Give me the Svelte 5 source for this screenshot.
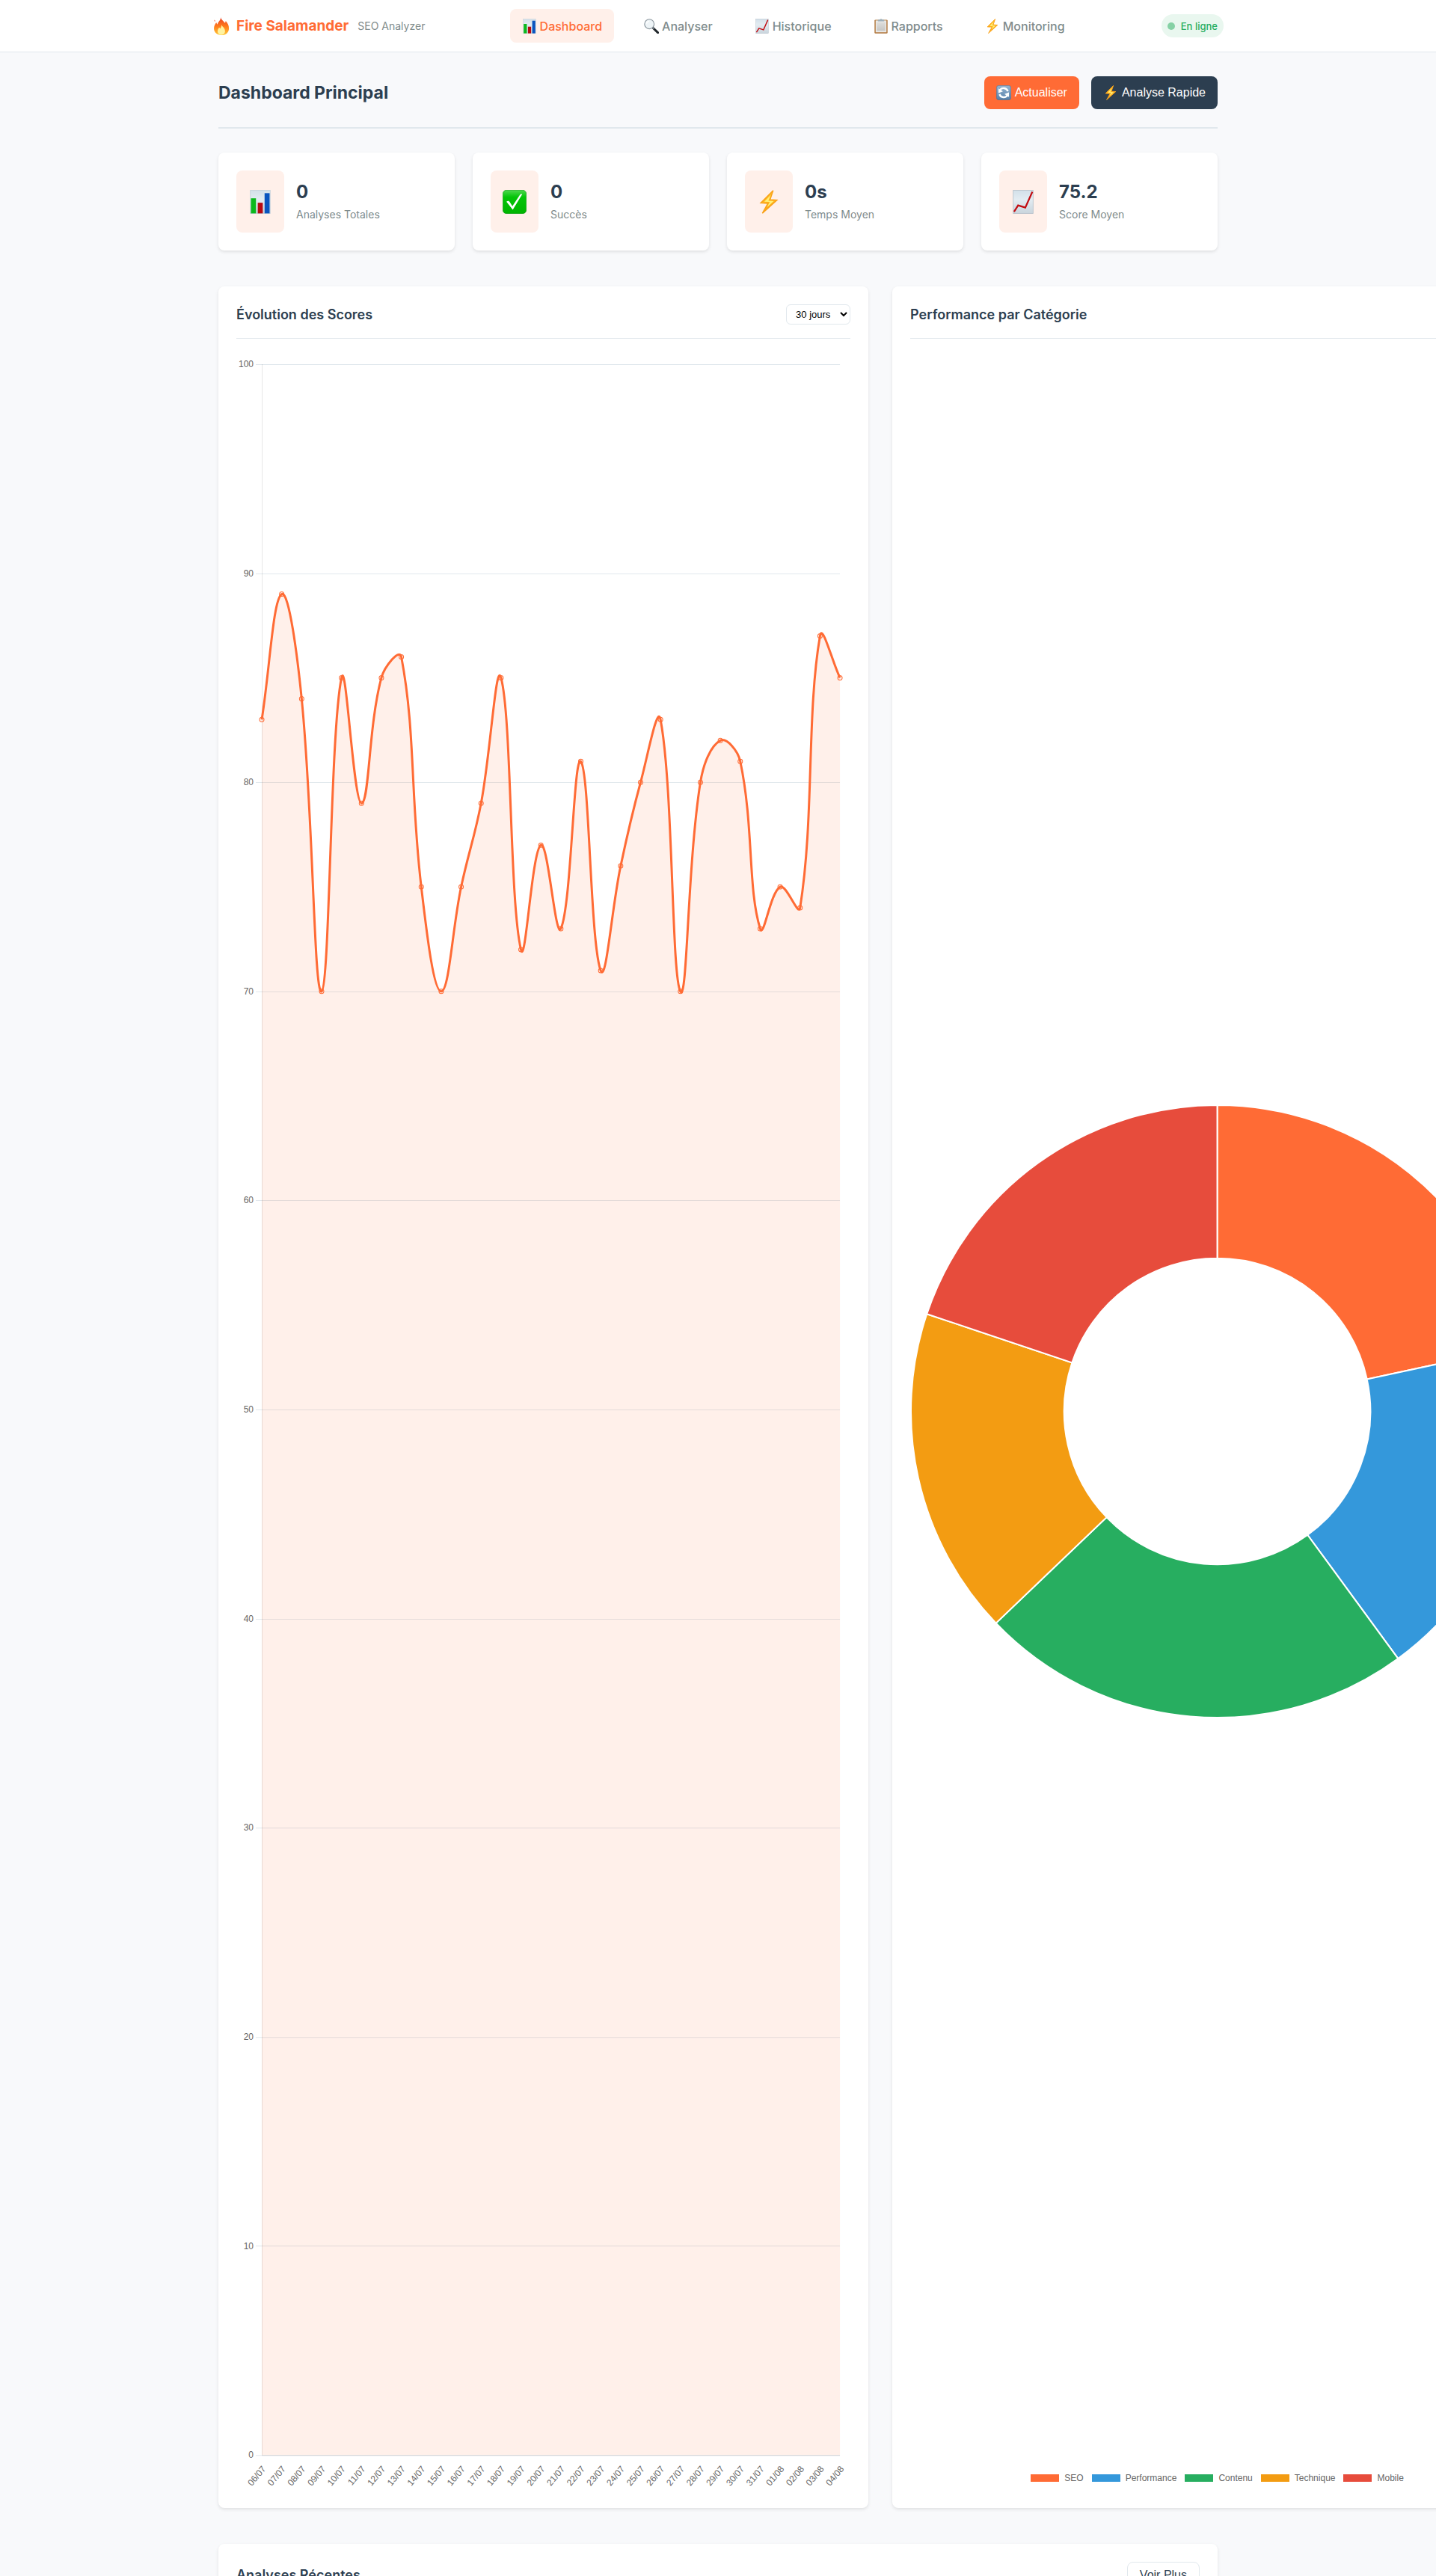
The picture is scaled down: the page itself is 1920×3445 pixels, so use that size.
<script>
  const navItems = [
    { icon: 'bars', label: 'Dashboard', active: true },
    { icon: 'search', label: 'Analyser' },
    { icon: 'trend', label: 'Historique' },
    { icon: 'clipboard', label: 'Rapports' },
    { icon: 'bolt', label: 'Monitoring' }
  ];

  const stats = [
    { icon: 'bars', value: '0', label: 'Analyses Totales' },
    { icon: 'check', value: '0', label: 'Succès' },
    { icon: 'bolt', value: '0s', label: 'Temps Moyen' },
    { icon: 'trend', value: '75.2', label: 'Score Moyen' }
  ];

  const scores = [
    83, 89, 84, 70, 85, 79, 85, 86, 75, 70, 75, 79, 85, 72, 77,
    73, 81, 71, 76, 80, 83, 70, 80, 82, 81, 73, 75, 74, 87, 85
  ];

  const two = (n) => String(n).padStart(2, '0');
  const days = scores.map((_, i) => (i < 26 ? `${two(i + 6)}/07` : `${two(i - 25)}/08`));

  // Plot area of the line chart, in viewBox units.
  const chart = { width: 821, height: 2853, left: 34, right: 807, top: 10, bottom: 2806 };
  const xAt = (i) => chart.left + (i * (chart.right - chart.left)) / (scores.length - 1);
  const yAt = (v) => chart.bottom - (v * (chart.bottom - chart.top)) / 100;
  const ticks = [100, 90, 80, 70, 60, 50, 40, 30, 20, 10, 0];
  const points = scores.map((v, i) => ({ x: xAt(i), y: yAt(v) }));

  // Cubic smoothing weighted by the distance to each neighbour.
  function smooth(pts, tension) {
    const handles = pts.map((p, i) => {
      const prev = pts[i - 1] ?? p;
      const next = pts[i + 1] ?? p;
      const before = Math.hypot(p.x - prev.x, p.y - prev.y);
      const after = Math.hypot(next.x - p.x, next.y - p.y);
      const a = (tension * before) / (before + after);
      const b = (tension * after) / (before + after);
      const dx = next.x - prev.x;
      const dy = next.y - prev.y;
      return { inX: p.x - a * dx, inY: p.y - a * dy, outX: p.x + b * dx, outY: p.y + b * dy };
    });
    let d = `M${pts[0].x} ${pts[0].y}`;
    for (let i = 1; i < pts.length; i++) {
      const from = handles[i - 1];
      const to = handles[i];
      d += `C${from.outX} ${from.outY} ${to.inX} ${to.inY} ${pts[i].x} ${pts[i].y}`;
    }
    return d;
  }

  const linePath = smooth(points, 0.4);
  const areaPath = `${linePath}L${chart.right} ${chart.bottom}L${chart.left} ${chart.bottom}Z`;

  const categories = [
    { name: 'SEO', value: 85, tone: 'seo' },
    { name: 'Performance', value: 72, tone: 'performance' },
    { name: 'Contenu', value: 90, tone: 'content' },
    { name: 'Technique', value: 68, tone: 'technical' },
    { name: 'Mobile', value: 78, tone: 'mobile' }
  ];

  function buildSlices(items) {
    const total = items.reduce((sum, c) => sum + c.value, 0);
    const outer = 409.5;
    const inner = 204.75;
    const center = 410.5;
    const at = (r, t) => `${center + r * Math.sin(t)} ${center - r * Math.cos(t)}`;
    let start = 0;
    return items.map((c) => {
      const end = start + (c.value / total) * Math.PI * 2;
      const d =
        `M${at(outer, start)}A${outer} ${outer} 0 0 1 ${at(outer, end)}` +
        `L${at(inner, end)}A${inner} ${inner} 0 0 0 ${at(inner, start)}Z`;
      start = end;
      return { ...c, d };
    });
  }
  const slices = buildSlices(categories);

  let period = $state('30');
</script>

<svelte:head><title>Fire Salamander</title></svelte:head>

{#snippet icon(name)}
  <svg class="icon" viewBox="0 0 20 20" aria-hidden="true">
    {#if name === 'bars'}
      <rect x="1.7" y="0.3" width="16.6" height="19.4" fill="url(#paper)" stroke="#c3d0da" stroke-width="0.5" />
      <rect x="2.2" y="7" width="4.2" height="12.6" fill="#0cb81c" />
      <rect x="7.9" y="10.7" width="4.2" height="8.900" fill="#b80a12" />
      <rect x="13.600" y="2.700" width="4.2" height="16.900" fill="#0a55bf" />
    {:else if name === 'trend'}
      <rect x="1.7" y="0.3" width="16.6" height="19.4" fill="url(#paper)" stroke="#b3bfc9" stroke-width="0.5" />
      <path d="M2.4 18.200 5.8 12.900 11.800 14.800 17.700 1.600" fill="none" stroke="#c20d12" stroke-width="1.400" />
    {:else if name === 'search'}
      <path d="m11.8 12 6.8 6.600" stroke="#20262b" stroke-width="3" stroke-linecap="round" />
      <path d="m11 11.2 2.400 2.400" stroke="#7c878f" stroke-width="1.600" />
      <circle cx="7.2" cy="7.2" r="6.4" fill="#eef4f7" stroke="#89949c" stroke-width="1.100" />
      <path d="M3.400 6.600a4 4 0 0 1 3.400-3.200" fill="none" stroke="#fff" stroke-width="1.400" />
    {:else if name === 'clipboard'}
      <rect x="1.300" y="1.400" width="17.400" height="18.400" rx="1.200" fill="#b27a41" />
      <rect x="2.800" y="2.400" width="14.400" height="15.800" fill="#e9e9e7" />
      <rect x="4.400" y="4.600" width="11.200" height="11.600" fill="url(#sheet)" />
      <path d="M5.800 3.400V2.200c0-.6.5-1 1.100-1h1.400a1.800 1.500 0 0 1 3.400 0h1.400c.6 0 1.100.4 1.100 1v1.200z" fill="#9fb0b9" />
    {:else if name === 'bolt'}
      <path d="M13.600 0.500 3.200 10.900l6 .3L4.600 19.500 16.800 8.500l-5.800-.4z" fill="url(#bolt)" stroke="#f9a21a" stroke-width="0.900" />
      <path d="M11.600 4.200 6.200 9.800l4.600.2-2.400 4.600 5.600-5.200-4.400-.4z" fill="#fff17a" />
    {:else if name === 'check'}
      <rect x="0.200" y="0.200" width="19.600" height="19.600" rx="3" fill="url(#green)" stroke="#0a9c12" stroke-width="0.400" />
      <path d="M3.200 9.900c1.300-1.200 2.200-.8 2.900.4l2.100 3.300 6.200-9.400c.6-.9 1.200-1 2-.6L8.500 16.600z" fill="#fff" />
    {:else if name === 'refresh'}
      <rect x="0.300" y="0.300" width="19.400" height="19.400" rx="3.400" fill="url(#blue)" stroke="#4d6c8d" stroke-width="0.600" />
      <path d="M15.600 8a6 6 0 0 0-10.800-1.200M4.400 12a6 6 0 0 0 10.800 1.200" fill="none" stroke="#fff" stroke-width="2.400" />
      <path d="M3 4.200v6.200l6-2.200zM17 15.800V9.600l-6 2.200z" fill="#fff" />
    {:else if name === 'fire'}
      <path d="M9.200 0c.4 2.600 3.200 4.200 4.700 6.400.6-.6.9-1.300.9-2.200 2.200 2.300 3.600 5 3.600 8.200 0 4.600-3.500 7.600-8.200 7.600-4.900 0-8.500-3-8.500-7.400 0-3 1.400-4.900 2.600-6.800.4 1 .7 1.700 1.400 2.200C6.300 4.900 9.400 3.500 9.200 0z" fill="url(#flame)" />
      <path d="M2.200 3c.8.5 1 1.200.8 2C2.200 4.600 1.900 3.900 2.200 3z" fill="#f4553a" />
      <path d="M10.300 8.400c.2 2 3.800 3.600 3.800 7 0 2.600-1.700 4.200-4.100 4.200s-4.200-1.600-4.200-4c0-2 1-3 1.800-4.200.4.700.8 1.100 1.300 1.300.6-1.300 1.200-2.500 1.400-4.300z" fill="#fff3a0" />
    {/if}
  </svg>
{/snippet}

<svg class="defs" aria-hidden="true">
  <defs>
    <linearGradient id="paper" x2="0" y2="1"><stop stop-color="#d3e0e9" /><stop offset="0.4" stop-color="#e3ecf2" /><stop offset="1" stop-color="#c9d4dc" /></linearGradient>
    <linearGradient id="sheet" x2="0" y2="1"><stop stop-color="#dededc" /><stop offset="1" stop-color="#c6c6c4" /></linearGradient>
    <linearGradient id="green" x2="0" y2="1"><stop stop-color="#4fd84f" /><stop offset="0.3" stop-color="#04c408" /><stop offset="1" stop-color="#00b400" /></linearGradient>
    <linearGradient id="blue" x2="0" y2="1"><stop stop-color="#97b6d2" /><stop offset="1" stop-color="#557fa8" /></linearGradient>
    <linearGradient id="bolt" x2="0" y2="1"><stop stop-color="#ffc22e" /><stop offset="1" stop-color="#ffa60f" /></linearGradient>
    <linearGradient id="flame" x2="0" y2="1"><stop stop-color="#e8412a" /><stop offset="0.5" stop-color="#ff7a1c" /><stop offset="1" stop-color="#ffc936" /></linearGradient>
  </defs>
</svg>

<div class="page">
  <header>
    <div class="bar">
      <div class="brand">
        <span class="flame">{@render icon('fire')}</span>
        <span class="name">Fire Salamander</span>
        <span class="tagline">SEO Analyzer</span>
      </div>
      <nav>
        {#each navItems as item}
          <a href="#{item.label.toLowerCase()}" class:active={item.active}>{@render icon(item.icon)}{item.label}</a>
        {/each}
      </nav>
      <div class="status"><span class="dot"></span>En ligne</div>
    </div>
  </header>

  <main>
    <div class="heading">
      <h1>Dashboard Principal</h1>
      <div class="actions">
        <button class="primary">{@render icon('refresh')}Actualiser</button>
        <button class="secondary">{@render icon('bolt')}Analyse Rapide</button>
      </div>
    </div>

    <section class="stats">
      {#each stats as stat}
        <article class="card stat">
          <div class="tile">{@render icon(stat.icon)}</div>
          <div class="figures">
            <strong>{stat.value}</strong>
            <span>{stat.label}</span>
          </div>
        </article>
      {/each}
    </section>

    <section class="charts">
      <article class="card">
        <div class="card-head">
          <h2>Évolution des Scores</h2>
          <select bind:value={period} aria-label="Période">
            <option value="7">7 jours</option>
            <option value="30">30 jours</option>
            <option value="90">90 jours</option>
          </select>
        </div>
        <svg class="line-chart" viewBox="0 0 {chart.width} {chart.height}" role="img" aria-label="Évolution des Scores">
          {#each ticks as tick}
            <path class="grid" d="M{chart.left - 8} {Math.round(yAt(tick)) + 0.5}H{chart.right}" />
            <text class="tick" x={chart.left - 11} y={yAt(tick) + 4} text-anchor="end">{tick}</text>
          {/each}
          <path class="axis" d="M{chart.left + 0.5} {chart.top}V{chart.bottom}" />
          <path class="axis" d="M{chart.left} {chart.bottom + 0.5}H{chart.right}" />
          <path class="area" d={areaPath} />
          <path class="line" d={linePath} />
          {#each points as p, i}
            <circle class="point" cx={p.x} cy={p.y} r="3" />
            <text class="tick" text-anchor="end" transform="translate({p.x + 6} {chart.bottom + 19}) rotate(-50)">{days[i]}</text>
          {/each}
        </svg>
      </article>

      <article class="card">
        <div class="card-head">
          <h2>Performance par Catégorie</h2>
        </div>
        <div class="donut">
          <svg viewBox="0 0 821 821" role="img" aria-label="Performance par Catégorie">
            {#each slices as slice}
              <path class="slice {slice.tone}" d={slice.d} />
            {/each}
          </svg>
        </div>
        <ul class="legend">
          {#each categories as c}
            <li><span class="swatch {c.tone}"></span>{c.name}</li>
          {/each}
        </ul>
      </article>
    </section>

    <section class="card recent">
      <div class="card-head">
        <h2>Analyses Récentes</h2>
        <button class="outline">Voir Plus</button>
      </div>
    </section>
  </main>
</div>

<style>
  :global(body) {
    background: #f8f9fb;
  }

  .page {
    height: 100vh;
    overflow: hidden;
    background: #f8f9fb;
    color: #2c3e50;
    font-family: Inter, 'Liberation Sans', sans-serif;
    font-size: 16px;
    line-height: 26px;
  }

  .page :where(*) {
    box-sizing: border-box;
  }

  .defs {
    position: absolute;
    width: 0;
    height: 0;
  }

  .icon {
    display: block;
    flex: none;
    width: 20px;
    height: 20px;
  }

  header {
    background: #fff;
    border-bottom: 1px solid #e1e8ed;
  }

  .bar {
    display: flex;
    align-items: center;
    justify-content: space-between;
    max-width: 1400px;
    margin: 0 auto;
    padding: 12px 24px;
  }

  .brand {
    display: flex;
    align-items: center;
  }

  .flame .icon {
    width: 24px;
    height: 24px;
  }

  .name {
    margin: 0 12px 0 8px;
    color: #ff6b35;
    font-size: 19px;
    font-weight: 700;
  }

  .tagline {
    color: #7f8c8d;
    font-size: 14px;
  }

  nav {
    display: flex;
    gap: 24px;
  }

  nav a {
    display: flex;
    align-items: center;
    gap: 4px;
    height: 45px;
    padding: 0 16px;
    border-radius: 8px;
    color: #7f8c8d;
    font-size: 16px;
    font-weight: 500;
    text-decoration: none;
  }

  nav a.active {
    background: #fff0ea;
    color: #ff6b35;
  }

  .status {
    display: flex;
    align-items: center;
    gap: 8px;
    height: 31px;
    padding: 0 8px;
    border-radius: 16px;
    background: #e9f7ef;
    color: #27ae60;
    font-size: 13px;
    font-weight: 500;
  }

  .dot {
    width: 10px;
    height: 10px;
    border-radius: 50%;
    background: #86d1a5;
  }

  main {
    max-width: 1400px;
    margin: 0 auto;
    padding: 32px;
  }

  .heading {
    display: flex;
    align-items: center;
    justify-content: space-between;
    margin-bottom: 32px;
    padding-bottom: 24px;
    border-bottom: 2px solid #e1e8ed;
  }

  h1,
  h2 {
    margin: 0;
  }

  h1 {
    font-size: 23px;
    font-weight: 700;
  }

  h2 {
    font-size: 18px;
    font-weight: 600;
  }

  button {
    display: flex;
    align-items: center;
    border: 0;
    border-radius: 8px;
    font-family: 'Liberation Sans', sans-serif;
    font-size: 16px;
  }

  .actions {
    display: flex;
    gap: 16px;
  }

  .actions button {
    gap: 5px;
    height: 44px;
    padding: 0 16px;
    color: #fff;
  }

  .primary {
    background: #ff6b35;
  }

  .secondary {
    background: #2c3e50;
  }

  .card {
    padding: 24px;
    border-radius: 8px;
    background: #fff;
    box-shadow: 0 2px 4px rgba(0, 0, 0, 0.1);
  }

  .stats {
    display: grid;
    grid-template-columns: repeat(4, 1fr);
    gap: 24px;
    margin-bottom: 48px;
  }

  .stat {
    display: flex;
    align-items: center;
    gap: 16px;
  }

  .tile {
    display: flex;
    align-items: center;
    justify-content: center;
    width: 64px;
    height: 83px;
    border-radius: 8px;
    background: #fff0ea;
  }

  .tile .icon {
    width: 32px;
    height: 32px;
  }

  .figures {
    display: flex;
    flex-direction: column;
    padding-bottom: 4px;
  }

  .figures strong {
    font-size: 24px;
    font-weight: 700;
    line-height: 38px;
  }

  .figures span {
    color: #7f8c8d;
    font-size: 14px;
    line-height: 22px;
  }

  /* The two chart panels are wider than the column that holds them. */
  .charts {
    display: grid;
    grid-template-columns: repeat(2, 65.05%);
    gap: 32px;
    margin-bottom: 48px;
  }

  .charts .card {
    display: flex;
    flex-direction: column;
  }

  .card-head {
    display: flex;
    align-items: center;
    justify-content: space-between;
    min-height: 46px;
    margin-bottom: 24px;
    padding-bottom: 18px;
    border-bottom: 1px solid #e1e8ed;
  }

  select {
    width: 86px;
    height: 27px;
    padding: 0 0 0 8px;
    border: 1px solid #e1e8ed;
    border-radius: 6px;
    background: #fff;
    color: #000;
    font-family: 'Liberation Sans', sans-serif;
    font-size: 13px;
  }

  .line-chart {
    display: block;
    width: 100%;
  }

  .grid,
  .axis,
  .line {
    fill: none;
  }

  .grid {
    stroke: #e1e8ed;
  }

  .axis {
    stroke: rgba(0, 0, 0, 0.1);
  }

  .area {
    fill: rgba(255, 107, 53, 0.1);
  }

  .line {
    stroke: #ff6b35;
    stroke-width: 3px;
  }

  .point {
    fill: rgba(255, 107, 53, 0.1);
    stroke: #ff6b35;
  }

  .tick {
    fill: #666;
    font-family: 'Liberation Sans', sans-serif;
    font-size: 12px;
  }

  .donut {
    display: flex;
    flex: 1;
    align-items: center;
  }

  .donut svg {
    width: 100%;
  }

  .slice {
    stroke: #fff;
    stroke-width: 2px;
  }

  .seo {
    fill: #ff6b35;
    background: #ff6b35;
  }

  .performance {
    fill: #3498db;
    background: #3498db;
  }

  .content {
    fill: #27ae60;
    background: #27ae60;
  }

  .technical {
    fill: #f39c12;
    background: #f39c12;
  }

  .mobile {
    fill: #e74c3c;
    background: #e74c3c;
  }

  .legend {
    display: flex;
    justify-content: center;
    gap: 11px;
    margin: 0;
    padding: 10px 0;
    color: #666;
    font-family: 'Liberation Sans', sans-serif;
    font-size: 12px;
    line-height: 12px;
    list-style: none;
  }

  .legend li {
    display: flex;
    align-items: center;
    gap: 7px;
  }

  .swatch {
    width: 38px;
    height: 10px;
  }

  .outline {
    height: 36px;
    padding: 0 16px;
    border: 1px solid #e1e8ed;
    background: #fff;
    color: #2c3e50;
  }
</style>
